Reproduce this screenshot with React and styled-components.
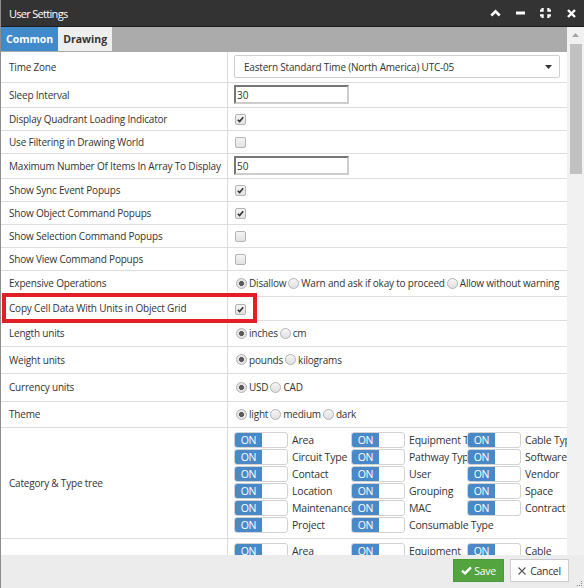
import React from 'react';
import styled, { createGlobalStyle } from 'styled-components';

const GlobalStyle = createGlobalStyle`
  html, body { margin: 0; padding: 0; background: #fff; }
  body { font-family: "Open Sans", "Liberation Sans", sans-serif; color: #333; }
`;

const Dialog = styled.div`
  position: relative;
  width: 584px;
  height: 588px;
  display: flex;
  flex-direction: column;
  border-left: 1px solid #8d8d8d;
  box-sizing: border-box;
  overflow: hidden;
  background: #fff;
`;

const TitleBar = styled.div`
  height: 26px;
  flex-shrink: 0;
  background: #333;
  border-bottom: 1px solid #1c1c1c;
  display: flex;
  align-items: center;
  padding: 0 8px;
  color: #fff;
`;

const Title = styled.div`
  flex: 1;
  font-size: 11px;
  letter-spacing: -0.7px;
`;

const TitleIcons = styled.div`
  display: flex;
  align-items: center;
`;

const IconButton = styled.span`
  width: 25px;
  height: 26px;
  display: flex;
  align-items: center;
  justify-content: center;
  &:last-child { width: 18px; justify-content: flex-end; }
`;

const Body = styled.div`
  flex: 1;
  display: flex;
  min-height: 0;
`;

const ScrollArea = styled.div`
  flex: 1;
  overflow: hidden;
  min-width: 0;
`;

const Tabs = styled.div`
  height: 25px;
  background: #ababab;
  display: flex;
  align-items: stretch;
`;

const Tab = styled.div`
  padding: 0 5px;
  display: flex;
  align-items: center;
  font-size: 10.5px;
  font-weight: 700;
  background: ${p => (p.active ? '#428bca' : '#eeeeee')};
  color: ${p => (p.active ? '#fff' : '#333')};
  margin-bottom: 1px;
`;

const Table = styled.table`
  width: 566px;
  border-collapse: collapse;
  table-layout: fixed;
  font-size: 10px;
  letter-spacing: -0.2px;
`;

const Row = styled.tr`
  height: ${p => p.h || 23}px;
  border-bottom: 1px solid #dedede;
`;

const LabelCell = styled.td`
  width: 218px;
  padding: 0 0 0 8px;
  border-right: 1px solid #dedede;
  white-space: nowrap;
  vertical-align: middle;
`;

const ValueCell = styled.td`
  padding: 0 0 0 6px;
  vertical-align: ${p => (p.top ? 'top' : 'middle')};
  white-space: nowrap;
  overflow: hidden;
`;

const SelectBox = styled.div`
  width: 326px;
  height: 23px;
  box-sizing: border-box;
  border: 1px solid #cfcfcf;
  border-radius: 2px;
  display: flex;
  align-items: center;
  padding: 0 7px 0 9px;
  font-size: 10px;
  span { flex: 1; }
`;

const TextInput = styled.input`
  width: 115px;
  height: 19px;
  box-sizing: border-box;
  border: 2px solid;
  border-color: #777 #cdcdcd #cdcdcd #777;
  padding: 0 1px;
  font-family: inherit;
  font-size: 10px;
  color: #333;
  outline: none;
  display: block;
`;

const CheckBox = styled.span`
  display: inline-flex;
  align-items: center;
  justify-content: center;
  width: 11px;
  height: 11px;
  box-sizing: border-box;
  margin-left: 1px;
  border: 1px solid #b4b4b4;
  border-radius: 2px;
  background: linear-gradient(#f4f4f4, #e2e2e2);
  vertical-align: middle;
`;

const RadioGroup = styled.div`
  display: flex;
  align-items: center;
  padding-left: 2px;
`;

const RadioItem = styled.label`
  display: inline-flex;
  align-items: center;
  margin-right: 2px;
`;

const RadioDot = styled.span`
  width: 11px;
  height: 11px;
  box-sizing: border-box;
  border-radius: 50%;
  border: 1px solid #b4b4b4;
  background: ${p => (p.checked ? 'radial-gradient(circle, #5a5a5a 0 2.2px, #e4e4e4 2.8px)' : 'linear-gradient(#f6f6f6, #e0e0e0)')};
  margin-right: 2px;
`;

const ToggleGrid = styled.div`
  display: grid;
  grid-template-columns: 117px 116px 116px;
  row-gap: 1px;
  padding: 4px 0;
`;

const ToggleItem = styled.div`
  display: flex;
  align-items: center;
  height: 16px;
  min-width: 0;
`;

const Toggle = styled.span`
  flex-shrink: 0;
  width: 54px;
  height: 16px;
  box-sizing: border-box;
  border: 1px solid #d2d2d2;
  border-radius: 3px;
  background: #fff;
  display: flex;
  overflow: hidden;
  b {
    width: 27px;
    background: #4a89c8;
    color: #fff;
    font-weight: 400;
    font-size: 10.5px;
    display: flex;
    align-items: center;
    justify-content: center;
  }
`;

const ToggleLabel = styled.span`
  margin-left: 4px;
  font-size: 10.5px;
  white-space: nowrap;
`;

const ScrollBar = styled.div`
  width: 17px;
  flex-shrink: 0;
  background: #f1f1f1;
  display: flex;
  flex-direction: column;
  align-items: center;
`;

const ScrollArrow = styled.div`
  height: 16px;
  display: flex;
  align-items: center;
  justify-content: center;
`;

const ScrollThumb = styled.div`
  width: 12px;
  height: 130px;
  margin-top: 1px;
  margin-left: 1px;
  background: #c1c1c1;
`;

const Footer = styled.div`
  height: 33px;
  flex-shrink: 0;
  background: #ececec;
  display: flex;
  justify-content: flex-end;
  align-items: flex-start;
  padding: 4px 15px 0 0;
  gap: 6px;
  box-sizing: border-box;
`;

const Button = styled.button`
  height: 23px;
  box-sizing: border-box;
  font-family: inherit;
  font-size: 10.5px;
  letter-spacing: -0.3px;
  display: inline-flex;
  align-items: center;
  justify-content: center;
  gap: ${p => (p.primary ? 2 : 4)}px;
  padding: 0;
  width: ${p => p.w}px;
  border: 1px solid ${p => (p.primary ? '#4a9a3b' : '#cccccc')};
  background: ${p => (p.primary ? '#53a33f' : '#fff')};
  color: ${p => (p.primary ? '#fff' : '#333')};
  border-radius: 0;
`;

const Highlight = styled.div`
  position: absolute;
  left: 1px;
  top: 293px;
  width: 255px;
  height: 30px;
  box-sizing: border-box;
  border: 4px solid #e41e26;
  pointer-events: none;
`;

const Grip = styled.svg`
  position: absolute;
  right: 1px;
  bottom: 1px;
`;

const Check = ({ checked }) => (
  <CheckBox>
    {checked && (
      <svg width="7" height="7" viewBox="0 0 7 7">
        <path d="M0.8 3.8 L2.6 5.6 L6.2 1.2" fill="none" stroke="#333" strokeWidth="1.6" />
      </svg>
    )}
  </CheckBox>
);

const Radios = ({ options, value }) => (
  <RadioGroup>
    {options.map(o => (
      <RadioItem key={o}>
        <RadioDot checked={o === value} />
        {o}
      </RadioItem>
    ))}
  </RadioGroup>
);

const categories = [
  'Area', 'Equipment Type', 'Cable Type',
  'Circuit Type', 'Pathway Type', 'Software',
  'Contact', 'User', 'Vendor',
  'Location', 'Grouping', 'Space',
  'Maintenance', 'MAC', 'Contract',
  'Project', 'Consumable Type',
];

const categories2 = ['Area', 'Equipment', 'Cable'];

const ToggleTree = ({ items }) => (
  <ToggleGrid>
    {items.map((c, i) => (
      <ToggleItem key={i}>
        <Toggle><b>ON</b></Toggle>
        <ToggleLabel>{c}</ToggleLabel>
      </ToggleItem>
    ))}
  </ToggleGrid>
);

const checkRows = [
  ['Show Sync Event Popups', true],
  ['Show Object Command Popups', true],
  ['Show Selection Command Popups', false],
  ['Show View Command Popups', false],
];

export default function App() {
  return (
    <>
      <GlobalStyle />
      <Dialog>
        <TitleBar>
          <Title>User Settings</Title>
          <TitleIcons>
            <IconButton>
              <svg width="11" height="8" viewBox="0 0 11 8">
                <path d="M1.3 6.5 L5.5 2.3 L9.7 6.5" fill="none" stroke="#fff" strokeWidth="2.6" />
              </svg>
            </IconButton>
            <IconButton>
              <svg width="9" height="4" viewBox="0 0 9 4">
                <rect x="0" y="0.5" width="9" height="3" fill="#fff" />
              </svg>
            </IconButton>
            <IconButton>
              <svg width="11" height="10" viewBox="0 0 11 10">
                <path d="M0 2.6 H2.6 V0 M8.4 0 V2.6 H11 M0 7.4 H2.6 V10 M8.4 10 V7.4 H11" fill="none" stroke="#fff" strokeWidth="2.2" />
              </svg>
            </IconButton>
            <IconButton>
              <svg width="9" height="9" viewBox="0 0 9 9">
                <path d="M1 1 L8 8 M8 1 L1 8" fill="none" stroke="#fff" strokeWidth="2.4" />
              </svg>
            </IconButton>
          </TitleIcons>
        </TitleBar>
        <Body>
          <ScrollArea>
            <Tabs>
              <Tab active>Common</Tab>
              <Tab>Drawing</Tab>
            </Tabs>
            <Table>
              <tbody>
                <Row h={30}>
                  <LabelCell>Time Zone</LabelCell>
                  <ValueCell>
                    <SelectBox>
                      <span>Eastern Standard Time (North America) UTC-05</span>
                      <svg width="7" height="4" viewBox="0 0 7 4"><path d="M0 0 H7 L3.5 4 Z" fill="#333" /></svg>
                    </SelectBox>
                  </ValueCell>
                </Row>
                <Row h={25}>
                  <LabelCell>Sleep Interval</LabelCell>
                  <ValueCell><TextInput defaultValue="30" /></ValueCell>
                </Row>
                <Row>
                  <LabelCell>Display Quadrant Loading Indicator</LabelCell>
                  <ValueCell><Check checked /></ValueCell>
                </Row>
                <Row>
                  <LabelCell>Use Filtering in Drawing World</LabelCell>
                  <ValueCell><Check /></ValueCell>
                </Row>
                <Row h={25}>
                  <LabelCell>Maximum Number Of Items In Array To Display</LabelCell>
                  <ValueCell><TextInput defaultValue="50" /></ValueCell>
                </Row>
                {checkRows.map(([label, checked]) => (
                  <Row key={label}>
                    <LabelCell>{label}</LabelCell>
                    <ValueCell><Check checked={checked} /></ValueCell>
                  </Row>
                ))}
                <Row h={26}>
                  <LabelCell>Expensive Operations</LabelCell>
                  <ValueCell>
                    <Radios options={['Disallow', 'Warn and ask if okay to proceed', 'Allow without warning']} value="Disallow" />
                  </ValueCell>
                </Row>
                <Row h={24}>
                  <LabelCell>Copy Cell Data With Units in Object Grid</LabelCell>
                  <ValueCell><Check checked /></ValueCell>
                </Row>
                <Row h={26}>
                  <LabelCell>Length units</LabelCell>
                  <ValueCell><Radios options={['inches', 'cm']} value="inches" /></ValueCell>
                </Row>
                <Row h={27}>
                  <LabelCell>Weight units</LabelCell>
                  <ValueCell><Radios options={['pounds', 'kilograms']} value="pounds" /></ValueCell>
                </Row>
                <Row h={28}>
                  <LabelCell>Currency units</LabelCell>
                  <ValueCell><Radios options={['USD', 'CAD']} value="USD" /></ValueCell>
                </Row>
                <Row h={26}>
                  <LabelCell>Theme</LabelCell>
                  <ValueCell><Radios options={['light', 'medium', 'dark']} value="light" /></ValueCell>
                </Row>
                <Row h={111}>
                  <LabelCell>Category &amp; Type tree</LabelCell>
                  <ValueCell><ToggleTree items={categories} /></ValueCell>
                </Row>
                <Row h={60}>
                  <LabelCell />
                  <ValueCell top><ToggleTree items={categories2} /></ValueCell>
                </Row>
              </tbody>
            </Table>
          </ScrollArea>
          <ScrollBar>
            <ScrollArrow>
              <svg width="7" height="4" viewBox="0 0 7 4"><path d="M0 4 H7 L3.5 0 Z" fill="#a3a3a3" /></svg>
            </ScrollArrow>
            <ScrollThumb />
          </ScrollBar>
        </Body>
        <Footer>
          <Button primary w={51}>
            <svg width="11" height="9" viewBox="0 0 11 9">
              <path d="M1 4.6 L4 7.4 L10 1.4" fill="none" stroke="#fff" strokeWidth="2.4" />
            </svg>
            Save
          </Button>
          <Button w={59}>
            <svg width="8" height="8" viewBox="0 0 8 8">
              <path d="M0.5 0.5 L7.5 7.5 M7.5 0.5 L0.5 7.5" fill="none" stroke="#555" strokeWidth="1.1" />
            </svg>
            Cancel
          </Button>
        </Footer>
        <Highlight />
        <Grip width="6" height="6" viewBox="0 0 6 6">
          <rect x="4" y="0" width="1" height="1" fill="#888" />
          <rect x="4" y="2" width="1" height="1" fill="#888" />
          <rect x="0" y="4" width="1" height="1" fill="#888" />
          <rect x="2" y="4" width="1" height="1" fill="#888" />
          <rect x="4" y="4" width="1" height="1" fill="#888" />
        </Grip>
      </Dialog>
    </>
  );
}
